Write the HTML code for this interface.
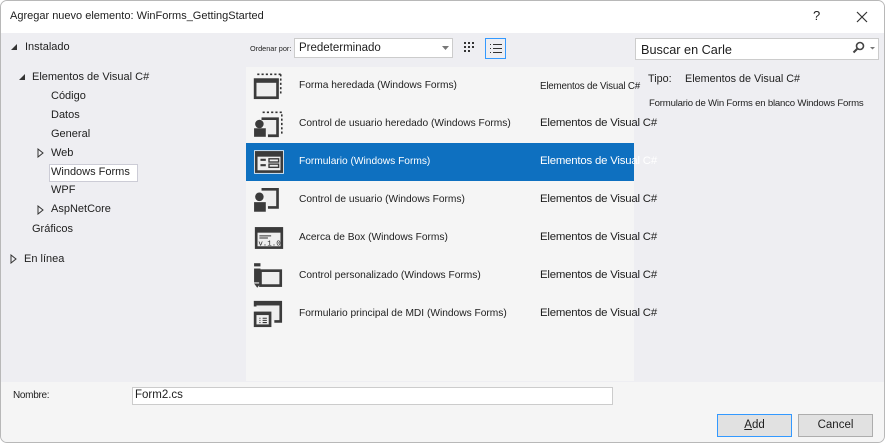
<!DOCTYPE html>
<html><head><meta charset="utf-8"><style>
*{margin:0;padding:0;box-sizing:border-box}
body{width:885px;height:443px;overflow:hidden;background:#fff;font-family:"Liberation Sans",sans-serif;font-size:12px;color:#1e1e1e;position:relative}
.win{position:absolute;left:0;top:0;width:885px;height:443px;border:1px solid #b8b8b8;border-radius:7px;overflow:hidden;background:#eeeef2}
.title{position:absolute;left:0;top:0;width:885px;height:32px;background:#fff}
.t{position:absolute;white-space:nowrap}
.tree{font-size:11px}
.list{position:absolute;left:245px;top:66px;width:388px;height:314px;background:#f5f5f5}
.row{position:absolute;left:0;width:388px;height:38px}
.row .n{position:absolute;left:53px;top:13px;font-size:10.2px;white-space:nowrap}
.row .c{position:absolute;left:294px;top:12px;font-size:11.4px;white-space:nowrap;letter-spacing:-0.2px}
.row svg{position:absolute;left:7px;top:5px}
.sel{background:#0e70c0;color:#fff}
.bottom{position:absolute;left:0;top:381px;width:885px;height:62px;background:#f5f5f5}
.btn{position:absolute;top:413px;height:23px;width:75px;background:#e1e1e1;border:1px solid #adadad;text-align:center;line-height:21px;font-size:11.5px}
</style></head><body><div class="win">
<div class="title">
<div class="t" style="left:9px;top:9px;font-size:11px">Agregar nuevo elemento: WinForms_GettingStarted</div>
<div class="t" style="left:812px;top:7px;font-size:13px">?</div>
<svg style="position:absolute;left:855px;top:10px" width="12" height="12"><path d="M1 1L11 11M11 1L1 11" stroke="#333" stroke-width="1.2"/></svg>
</div>
<svg style="position:absolute;left:9px;top:42px" width="8" height="8"><path d="M7 1V7H1Z" fill="#333"/></svg>
<div class="t tree" style="left:24px;top:40px">Instalado</div>
<svg style="position:absolute;left:17px;top:72px" width="8" height="8"><path d="M7 1V7H1Z" fill="#333"/></svg>
<div class="t tree" style="left:31px;top:70px">Elementos de Visual C#</div>
<div class="t tree" style="left:50px;top:89px">Código</div>
<div class="t tree" style="left:50px;top:108px">Datos</div>
<div class="t tree" style="left:50px;top:127px">General</div>
<svg style="position:absolute;left:36px;top:147px" width="7" height="10"><path d="M1 1L6 5L1 9Z" fill="none" stroke="#333"/></svg>
<div class="t tree" style="left:50px;top:146px">Web</div>
<div style="position:absolute;left:48px;top:163px;width:89px;height:18px;background:#fff;border:1px solid #ccccd6"></div>
<div class="t tree" style="left:50px;top:165px">Windows Forms</div>
<div class="t tree" style="left:50px;top:183px">WPF</div>
<svg style="position:absolute;left:36px;top:204px" width="7" height="10"><path d="M1 1L6 5L1 9Z" fill="none" stroke="#333"/></svg>
<div class="t tree" style="left:50px;top:202px">AspNetCore</div>
<div class="t tree" style="left:31px;top:222px">Gráficos</div>
<svg style="position:absolute;left:9px;top:253px" width="7" height="10"><path d="M1 1L6 5L1 9Z" fill="none" stroke="#333"/></svg>
<div class="t tree" style="left:23px;top:252px">En línea</div>

<div class="t" style="left:249px;top:43px;font-size:7.3px">Ordenar por:</div>
<div style="position:absolute;left:293px;top:37px;width:159px;height:20px;background:#fff;border:1px solid #ccc"></div>
<div class="t" style="left:298px;top:41px;font-size:11.5px">Predeterminado</div>
<svg style="position:absolute;left:441px;top:45px" width="7" height="4"><path d="M0 0H7L3.5 4Z" fill="#777"/></svg>
<svg style="position:absolute;left:462px;top:40px" width="14" height="14" fill="#333"><rect x="1" y="1" width="2" height="2"/><rect x="5" y="1" width="2" height="2"/><rect x="9" y="1" width="2" height="2"/><rect x="1" y="5" width="2" height="2"/><rect x="5" y="5" width="2" height="2"/><rect x="9" y="5" width="2" height="2"/><rect x="1" y="9" width="2" height="2"/><rect x="5" y="9" width="2" height="2"/></svg>
<div style="position:absolute;left:484px;top:37px;width:21px;height:21px;border:1px solid #3399ff"></div>
<svg style="position:absolute;left:488px;top:41px" width="14" height="14" fill="#333"><rect x="1" y="2" width="1" height="1"/><rect x="4" y="2" width="9" height="1"/><rect x="1" y="6" width="1" height="1"/><rect x="4" y="6" width="9" height="1"/><rect x="1" y="10" width="1" height="1"/><rect x="4" y="10" width="9" height="1"/></svg>

<div class="list">
<div class="row" style="top:0"><svg width="32" height="28" viewBox="0 0 30 26"><path d="M4 2H26M26 2V20" stroke="#333" stroke-width="1.5" stroke-dasharray="2 2" fill="none"/><rect x="2" y="7" width="21" height="17" fill="#eee" stroke="#3b3b3b" stroke-width="2.5"/><rect x="1" y="6" width="23" height="4" fill="#3b3b3b"/></svg><div class="n">Forma heredada (Windows Forms)</div><div class="c" style="font-size:9.8px;top:14px">Elementos de Visual C#</div></div>
<div class="row" style="top:38px"><svg width="32" height="28" viewBox="0 0 30 26"><path d="M9 2H27V22" stroke="#333" stroke-width="1.5" stroke-dasharray="2 2" fill="none"/><path d="M8 8H23V24H14" fill="#eee" stroke="#3b3b3b" stroke-width="2.5"/><circle cx="6" cy="13" r="4" fill="#3b3b3b"/><rect x="1" y="17" width="11" height="8" fill="#3b3b3b"/></svg><div class="n">Control de usuario heredado (Windows Forms)</div><div class="c">Elementos de Visual C#</div></div>
<div class="row sel" style="top:76px"><svg width="32" height="28" viewBox="0 0 30 26"><rect x="1" y="2" width="28" height="22" fill="#fff"/><rect x="3" y="4" width="24" height="18" fill="#eee" stroke="#3b3b3b" stroke-width="2.5"/><rect x="3" y="4" width="24" height="4" fill="#3b3b3b"/><path d="M7 11H12M7 16H12" stroke="#3b3b3b" stroke-width="2"/><rect x="15" y="10" width="9" height="3" fill="none" stroke="#3b3b3b" stroke-width="1.3"/><rect x="15" y="15" width="9" height="3" fill="none" stroke="#3b3b3b" stroke-width="1.3"/></svg><div class="n">Formulario (Windows Forms)</div><div class="c">Elementos de Visual C#</div></div>
<div class="row" style="top:114px"><svg width="32" height="28" viewBox="0 0 30 26"><path d="M8 3H23V20H14" fill="#eee" stroke="#3b3b3b" stroke-width="2.5"/><circle cx="6" cy="10" r="4" fill="#3b3b3b"/><rect x="1" y="15" width="11" height="9" fill="#3b3b3b"/></svg><div class="n">Control de usuario (Windows Forms)</div><div class="c">Elementos de Visual C#</div></div>
<div class="row" style="top:152px"><svg width="32" height="28" viewBox="0 0 30 26"><rect x="3" y="4" width="24" height="18" fill="#eee" stroke="#3b3b3b" stroke-width="2.5"/><rect x="3" y="4" width="24" height="4" fill="#3b3b3b"/><path d="M6 11H17M6 13H14" stroke="#333"/><text x="5" y="20" font-size="7" font-family="Liberation Mono" fill="#222">v.1.0</text></svg><div class="n">Acerca de Box (Windows Forms)</div><div class="c">Elementos de Visual C#</div></div>
<div class="row" style="top:190px"><svg width="32" height="28" viewBox="0 0 30 26"><rect x="7" y="8" width="19" height="14" fill="#eee" stroke="#3b3b3b" stroke-width="2.5"/><rect x="1" y="1" width="6" height="3" fill="#3b3b3b"/><rect x="1" y="6" width="6" height="13" fill="#3b3b3b"/><path d="M1 20H7L4 24Z" fill="#3b3b3b"/></svg><div class="n">Control personalizado (Windows Forms)</div><div class="c">Elementos de Visual C#</div></div>
<div class="row" style="top:228px"><svg width="32" height="28" viewBox="0 0 30 26"><path d="M2 6V2H26V20H20" fill="#eee" stroke="#3b3b3b" stroke-width="2.5"/><rect x="2" y="1" width="25" height="4" fill="#3b3b3b"/><rect x="2" y="12" width="14" height="12" fill="#eee" stroke="#3b3b3b" stroke-width="2.5"/><rect x="2" y="11" width="14" height="3" fill="#3b3b3b"/><path d="M6 17H7M9 17H13M6 19H7M9 19H13M6 21H7M9 21H13" stroke="#333"/></svg><div class="n">Formulario principal de MDI (Windows Forms)</div><div class="c">Elementos de Visual C#</div></div>
</div>

<div style="position:absolute;left:634px;top:37px;width:244px;height:22px;background:#fff;border:1px solid #ccc"></div>
<div class="t" style="left:640px;top:42px;font-size:12.7px">Buscar en Carle</div>
<svg style="position:absolute;left:851px;top:40px" width="24" height="14"><circle cx="8" cy="5" r="3.5" fill="none" stroke="#444" stroke-width="1.6"/><path d="M5.5 7.5L1.5 11.5" stroke="#444" stroke-width="2"/><path d="M18 6H23L20.5 8.5Z" fill="#777"/></svg>
<div class="t" style="left:647px;top:72px;font-size:10.8px">Tipo:</div>
<div class="t" style="left:684px;top:72px;font-size:10.8px">Elementos de Visual C#</div>
<div class="t" style="left:648px;top:97px;font-size:9.6px;letter-spacing:-0.2px">Formulario de Win Forms en blanco Windows Forms</div>

<div class="bottom"></div>
<div class="t" style="left:12px;top:389px;font-size:10px;letter-spacing:-0.3px">Nombre:</div>
<div style="position:absolute;left:131px;top:386px;width:481px;height:18px;background:#fff;border:1px solid #ccc"></div>
<div class="t" style="left:134px;top:388px;font-size:11.5px">Form2.cs</div>
<div class="btn" style="left:716px;border-color:#3399ff"><u>A</u>dd</div>
<div class="btn" style="left:797px">Cancel</div>
</div></body></html>
